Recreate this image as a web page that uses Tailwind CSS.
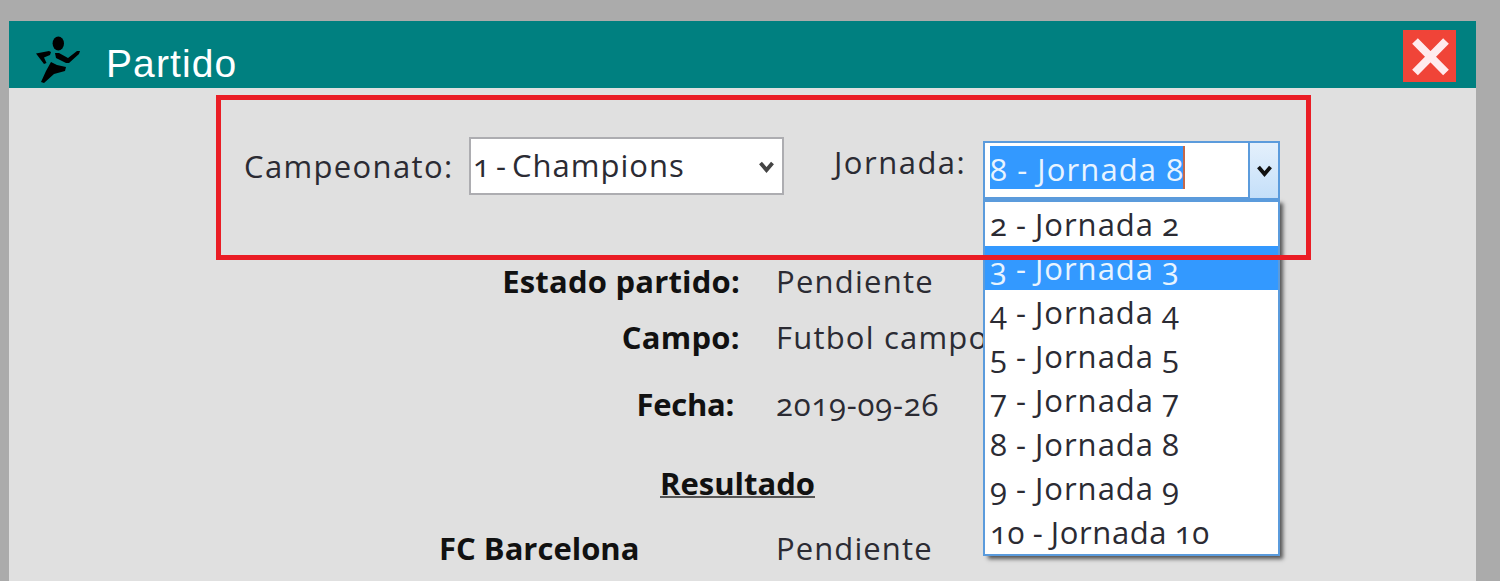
<!DOCTYPE html>
<html lang="es">
<head>
<meta charset="utf-8">
<title>Partido</title>
<script src="https://cdn.jsdelivr.net/npm/@tailwindcss/browser@4"></script>
</head>
<body class="h-[581px] w-[1500px] overflow-hidden bg-[#ababab] pl-[9px] pt-[21px] font-['Open_Sans',sans-serif] text-[31px] leading-[44px] oldstyle-nums whitespace-nowrap text-[#2b2b33]">
<main class="relative h-[560px] w-[1467px] bg-[#e0e0e0]">
  <header class="flex h-[67px] items-center bg-[#008080] pl-[26px] pr-[20px]">
    <svg class="mt-[10px] h-[50px] w-[46px]" viewBox="0 0 46 50" fill="#000">
      <ellipse cx="23.3" cy="8.5" rx="5.7" ry="7"/>
      <path d="M1 18.500L14 16L16 17L15 20L9 22.500L11.500 28L9 29Z"/>
      <path d="M20 18L24 18L33 23L42 16L45 16L44 19L34 28L31 28L21 23Z"/>
      <path d="M16 27L22 30L31 32L30 36L19 39L9 48L6 47L11 36Z"/>
    </svg>
    <h1 class="ml-[25px] mt-[18px] font-['Liberation_Sans',sans-serif] text-[39px] tracking-[1.1px] text-white">Partido</h1>
    <button class="ml-auto mt-[3px] flex h-[52px] w-[53px] items-center justify-center bg-[#f04438]">
      <svg class="mt-[2px] h-[40px] w-[38px]" viewBox="0 0 38 40" fill="none" stroke="#ffebee" stroke-width="8"><path d="M4 4L35 35.500M35 4L4 35.500"/></svg>
    </button>
  </header>

  <section class="flex h-[168px] items-start pl-[235px]">
    <label class="mt-[56px] w-[225px] tracking-[1.35px]">Campeonato:</label>
    <div class="mt-[49px] flex h-[58px] w-[315px] justify-between border-2 border-[#adadb1] bg-white pl-[2px] pr-[8px]">
      <span class="mt-[4px] tracking-[1px] [word-spacing:-4px]">1 - Champions</span>
      <svg class="mt-[21px] h-[14px] w-[15px]" viewBox="0 0 15 14" fill="none" stroke="#444" stroke-width="3.8"><path d="M1.500 3L7.500 10L13.500 3"/></svg>
    </div>
    <label class="ml-[50px] mt-[52px] w-[149px] tracking-[1.5px]">Jornada:</label>
    <div class="relative mt-[53px] flex h-[58px] w-[297px] border-2 border-[#5b9bdc] bg-white">
      <span class="ml-[5px] mt-[3px] h-[43px] w-[195px] border-r-2 border-[#c4694a] bg-[#3399ff] leading-[46px] tracking-[1.1px] text-[#e8f4ff]">8 - Jornada 8</span>
      <span class="ml-auto flex h-[56px] w-[30px] justify-center border-l-2 border-[#5b9bdc] bg-gradient-to-b from-[#e4f0fc] to-[#c4dff9]">
        <svg class="mt-[21px] h-[14px] w-[15px]" viewBox="0 0 15 14" fill="none" stroke="#111" stroke-width="3.8"><path d="M1.500 3L7.500 10L13.500 3"/></svg>
      </span>
      <ul class="absolute -left-[2px] top-[55px] z-10 w-[297px] border-2 border-t-4 border-[#5b9bdc] bg-white tracking-[1px] [word-spacing:-1px] shadow-[4px_4px_4px_-1px_#555]">
        <li class="pl-[5px]">2 - Jornada 2</li>
        <li class="bg-[#3399ff] pl-[5px] text-[#e8f4ff]">3 - Jornada 3</li>
        <li class="pl-[5px]">4 - Jornada 4</li>
        <li class="pl-[5px]">5 - Jornada 5</li>
        <li class="pl-[5px]">7 - Jornada 7</li>
        <li class="pl-[5px]">8 - Jornada 8</li>
        <li class="pl-[5px]">9 - Jornada 9</li>
        <li class="pl-[5px] tracking-[0.6px]">10 - Jornada 10</li>
      </ul>
    </div>
  </section>

  <dl class="grid grid-cols-[731px_1fr] gap-x-[36px]">
    <dt class="mt-[3px] text-right font-bold tracking-[0.2px] text-[#111]">Estado partido:</dt>
    <dd class="mt-[3px] tracking-[1.25px]">Pendiente</dd>
    <dt class="mt-[12px] text-right font-bold tracking-[0.3px] text-[#111]">Campo:</dt>
    <dd class="mt-[12px] tracking-[1.2px]">Futbol campo</dd>
    <dt class="mt-[23px] pr-[6px] text-right font-bold tracking-[-0.3px] text-[#111]">Fecha:</dt>
    <dd class="mt-[23px] tracking-[0.8px]">2019-09-26</dd>
  </dl>
  <h2 class="ml-[651px] mt-[35px] font-bold text-[#111]"><span class="inline-block h-[37px] border-b-2 border-[#555]">Resultado</span></h2>
  <div class="mt-[21px] flex">
    <span class="ml-[430px] w-[337px] font-bold text-[#111]">FC Barcelona</span>
    <span class="tracking-[1.1px]">Pendiente</span>
  </div>
  <div class="absolute left-[207px] top-[74px] z-20 h-[165px] w-[1095px] border-5 border-[#ea1d25]"></div>
</main>
</body>
</html>
